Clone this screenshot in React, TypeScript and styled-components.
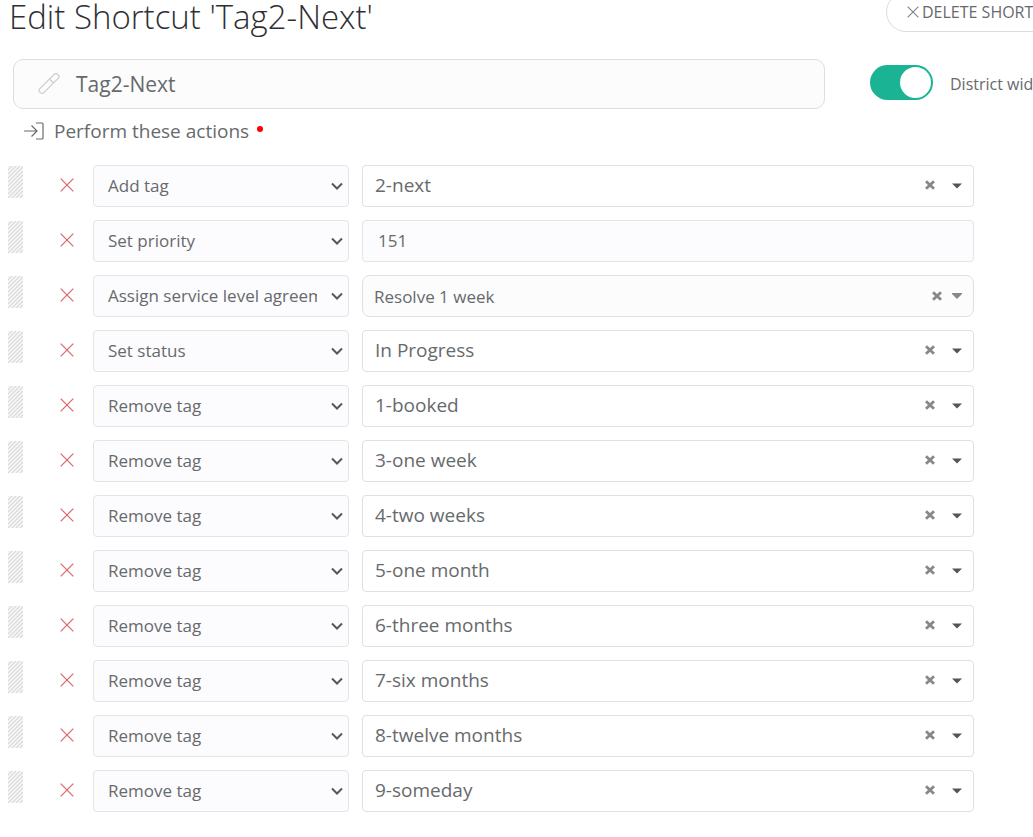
import React, { useState } from "react";
import styled, { createGlobalStyle, css } from "styled-components";

const GlobalStyle = createGlobalStyle`
  *, *::before, *::after { box-sizing: border-box; }
  body {
    margin: 0;
    background: #fff;
    color: #676a6c;
    font-family: "Open Sans", "Noto Sans", sans-serif;
    overflow-x: hidden;
  }
  button, input, select { font: inherit; color: inherit; }
`;

const Page = styled.main`
  padding-bottom: 24px;
  overflow: hidden;
`;

const Header = styled.header`
  display: flex;
  align-items: flex-start;
  justify-content: space-between;
  height: 59px;
  padding-left: 9px;
`;

const Title = styled.h1`
  margin: 0;
  font-size: 33px;
  line-height: 34px;
  font-weight: 300;
  color: #2f2f33;
  white-space: nowrap;
`;

const HeaderAside = styled.div`
  flex: 0 0 147px;
  min-width: 0;
  height: 32px;
  display: flex;
  align-items: flex-end;
`;

const DeleteButton = styled.button`
  display: flex;
  align-items: center;
  flex: none;
  gap: 3px;
  height: 40px;
  padding: 0 20px;
  border: 1px solid #dcdcdc;
  border-radius: 20px;
  background: #fff;
  font-size: 16px;
  white-space: nowrap;
`;

const NameRow = styled.div`
  display: flex;
  align-items: center;
  padding-left: 13px;
`;

const NameField = styled.label`
  display: flex;
  flex: 1;
  align-items: center;
  gap: 16px;
  min-width: 0;
  height: 50px;
  padding: 0 24px;
  border: 1px solid #dedede;
  border-radius: 10px;
  background: #fcfcfc;
`;

const NameInput = styled.input`
  flex: 1;
  min-width: 0;
  padding: 0;
  border: 0;
  outline: 0;
  background: transparent;
  font-size: 21px;
  line-height: 30px;
`;

const Scope = styled.label`
  display: flex;
  flex: 0 0 208px;
  align-items: center;
  gap: 17px;
  min-width: 0;
  padding-left: 45px;
  font-size: 16px;
  white-space: nowrap;
`;

const Switch = styled.input`
  flex: none;
  display: flex;
  align-items: center;
  appearance: none;
  width: 63px;
  height: 35px;
  margin: 0 0 3px;
  padding: 2px;
  border-radius: 18px;
  background: #c9c9c9;
  &::before {
    content: "";
    width: 31px;
    height: 31px;
    border-radius: 50%;
    background: #fff;
  }
  &:checked {
    justify-content: flex-end;
    background: #1ab394;
  }
`;

const SectionTitle = styled.h2`
  display: flex;
  align-items: center;
  gap: 8px;
  height: 44px;
  margin: 0 0 12px;
  padding-left: 24px;
  font-size: 19px;
  font-weight: 400;
`;

const Required = styled.span`
  width: 6px;
  height: 6px;
  margin-bottom: 4px;
  border-radius: 50%;
  background: #f00;
`;

const ActionList = styled.ul`
  display: flex;
  flex-direction: column;
  gap: 13px;
  margin: 0;
  padding: 0 59px 0 8px;
  list-style: none;
`;

const ActionRow = styled.li`
  display: grid;
  grid-template-columns: 15px 70px 256px minmax(0, 1fr);
  align-items: start;
`;

const Grip = styled.span`
  height: 32px;
  margin-top: 1px;
  cursor: move;
`;

const RemoveButton = styled.button`
  display: flex;
  align-items: center;
  justify-content: center;
  height: 40px;
  padding: 0 0 0 17px;
  border: 0;
  background: none;
  color: #d9646a;
`;

const Field = styled.div`
  display: grid;
  align-items: center;
  height: 42px;
  min-width: 0;
`;

const TypeField = styled(Field)`
  grid-template-columns: minmax(0, 1fr) 17px;
  border: 1px solid #e3e4e7;
  border-radius: 4px;
  background: #fcfcfe;
`;

const TypeSelect = styled.select`
  grid-area: 1 / 1 / 2 / 3;
  appearance: none;
  height: 40px;
  width: 100%;
  padding: 0 31px 2px 14px;
  border: 0;
  background: transparent;
  font-size: 17px;
`;

const Chevron = styled.svg`
  grid-area: 1 / 2;
  pointer-events: none;
`;

type Tone = "plain" | "soft";

const ValueField = styled(Field)<{ $tone: Tone }>`
  grid-template-columns: minmax(0, 1fr) 27px 21px;
  margin-left: 13px;
  border: 1px solid #dfe0e2;
  border-radius: 4px;
  background: #fff;
  ${({ $tone }) =>
    $tone === "soft" &&
    css`
      grid-template-columns: minmax(0, 1fr) 20px 21px;
      border-radius: 8px;
      background: #fcfcfc;
    `}
`;

const ValueSelect = styled.select<{ $tone: Tone }>`
  grid-area: 1 / 1 / 2 / 4;
  appearance: none;
  width: 100%;
  height: 40px;
  border: 0;
  background: transparent;
  padding: ${({ $tone }) => ($tone === "soft" ? "0 48px 0 11px" : "0 48px 2px 12px")};
  font-size: ${({ $tone }) => ($tone === "soft" ? "17px" : "19px")};
`;

const ClearButton = styled.button<{ $tone: Tone }>`
  grid-area: 1 / 2;
  display: flex;
  padding: ${({ $tone }) => ($tone === "soft" ? "0" : "0 0 2px")};
  border: 0;
  background: none;
  color: #888;
`;

const Caret = styled.svg<{ $tone: Tone }>`
  grid-area: 1 / 3;
  pointer-events: none;
  color: ${({ $tone }) => ($tone === "soft" ? "#888" : "#555")};
`;

const PriorityInput = styled.input`
  height: 42px;
  min-width: 0;
  margin-left: 13px;
  padding: 0 15px 2px;
  border: 1px solid #e3e4e7;
  border-radius: 4px;
  background: #fcfcfe;
  font-size: 17px;
`;

function Cross({ size, color = "currentColor" }: { size: number; color?: string }) {
  return (
    <svg width={size} height={size} viewBox="0 0 14 14" fill="none" stroke={color} strokeWidth="1.2" aria-hidden="true">
      <path d="M0.7 0.7 13.3 13.3M13.3 0.7 0.7 13.3" />
    </svg>
  );
}

function Hatch() {
  return (
    <svg width="15" height="32" aria-hidden="true">
      <defs>
        <pattern id="hatch" width="4" height="4" patternUnits="userSpaceOnUse">
          <path d="M-1 1 1-1M0 4 4 0M3 5 5 3" stroke="#d8d8d8" strokeWidth="1.2" />
        </pattern>
      </defs>
      <rect width="15" height="32" fill="#f7f7f7" />
      <rect width="15" height="32" fill="url(#hatch)" />
    </svg>
  );
}

type Kind = "tag" | "number" | "agreement";
interface Action {
  type: string;
  value: string;
  kind: Kind;
}

const actions: Action[] = [
  { type: "Add tag", value: "2-next", kind: "tag" },
  { type: "Set priority", value: "151", kind: "number" },
  { type: "Assign service level agreement", value: "Resolve 1 week", kind: "agreement" },
  { type: "Set status", value: "In Progress", kind: "tag" },
  { type: "Remove tag", value: "1-booked", kind: "tag" },
  { type: "Remove tag", value: "3-one week", kind: "tag" },
  { type: "Remove tag", value: "4-two weeks", kind: "tag" },
  { type: "Remove tag", value: "5-one month", kind: "tag" },
  { type: "Remove tag", value: "6-three months", kind: "tag" },
  { type: "Remove tag", value: "7-six months", kind: "tag" },
  { type: "Remove tag", value: "8-twelve months", kind: "tag" },
  { type: "Remove tag", value: "9-someday", kind: "tag" },
];

function ValueControl({ action }: { action: Action }) {
  if (action.kind === "number") {
    return <PriorityInput aria-label="Priority" defaultValue={action.value} />;
  }
  const tone: Tone = action.kind === "agreement" ? "soft" : "plain";
  return (
    <ValueField $tone={tone}>
      <ValueSelect $tone={tone} aria-label={action.type} defaultValue={action.value}>
        <option>{action.value}</option>
      </ValueSelect>
      <ClearButton $tone={tone} type="button" aria-label="Clear value">
        <svg width="10" height="10" viewBox="0 0 10 10" stroke="currentColor" strokeWidth="2.8" aria-hidden="true">
          <path d="M1 1.2 9 8.8M9 1.2 1 8.8" />
        </svg>
      </ClearButton>
      <Caret $tone={tone} width="10" height="6" viewBox="0 0 10 6" fill="currentColor" aria-hidden="true">
        <path d={tone === "soft" ? "M0 0h10v1L5 6 0 1z" : "M0 .5h10L5 5.5z"} />
      </Caret>
    </ValueField>
  );
}

export default function App() {
  const [districtWide, setDistrictWide] = useState(true);
  return (
    <>
      <GlobalStyle />
      <Page>
        <Header>
          <Title>Edit Shortcut 'Tag2-Next'</Title>
          <HeaderAside>
            <DeleteButton type="button">
              <Cross size={12} color="#7c7e80" />
              DELETE SHORTCUT
            </DeleteButton>
          </HeaderAside>
        </Header>
        <NameRow>
          <NameField>
            <svg width="22" height="22" viewBox="0 0 22 22" fill="none" stroke="#cccccc" strokeWidth="1.2" aria-hidden="true">
              <g transform="rotate(-45 11 10.5)">
                <rect x="-1.500" y="7.700" width="25" height="5.600" rx="2" />
                <path d="M14.500 7.700v5.600" />
              </g>
            </svg>
            <NameInput aria-label="Shortcut name" defaultValue="Tag2-Next" />
          </NameField>
          <Scope>
            <Switch type="checkbox" role="switch" checked={districtWide} onChange={(e) => setDistrictWide(e.target.checked)} />
            District wide
          </Scope>
        </NameRow>
        <SectionTitle>
          <svg width="22" height="18" viewBox="0 0 22 18" fill="none" stroke="currentColor" strokeWidth="1.2" aria-hidden="true">
            <path d="M0 9h12.500M7.500 3.500l5.500 5.500-5.500 5.500M12 1h6q1 0 1 1v14q0 1-1 1h-6" />
          </svg>
          Perform these actions
          <Required role="img" aria-label="required" />
        </SectionTitle>
        <ActionList>
          {actions.map((action) => (
            <ActionRow key={action.value}>
              <Grip>
                <Hatch />
              </Grip>
              <RemoveButton type="button" aria-label="Remove action">
                <Cross size={14} />
              </RemoveButton>
              <TypeField>
                <TypeSelect aria-label="Action type" defaultValue={action.type}>
                  <option>{action.type}</option>
                </TypeSelect>
                <Chevron width="12" height="8" viewBox="0 0 12 8" fill="none" stroke="#55585a" strokeWidth="2" aria-hidden="true">
                  <path d="M1 1.500l5 5 5-5" />
                </Chevron>
              </TypeField>
              <ValueControl action={action} />
            </ActionRow>
          ))}
        </ActionList>
      </Page>
    </>
  );
}
